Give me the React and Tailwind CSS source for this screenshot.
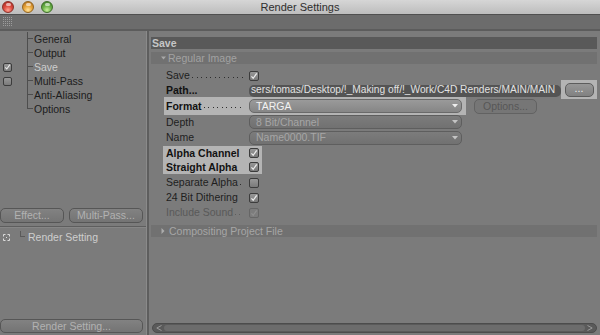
import clsx from "clsx";

const PATH = "sers/tomas/Desktop/!_Making off/!_Work/C4D Renders/MAIN/MAIN";

function Check({ on, dim, small }) {
  return (
    <span
      className={clsx(
        "flex shrink-0 items-center justify-center rounded-[2px] border",
        small ? "w-[9px] h-[9px]" : "w-[10px] h-[10px]",
        dim
          ? "border-[#666] bg-[#7c7c7c]"
          : "border-[#3c3c3c] bg-gradient-to-b from-[#979797] to-[#7a7a7a]"
      )}
    >
      {on && (
        <svg viewBox="0 0 10 10" className="w-[8px] h-[8px]">
          <path d="M1.8 5.4 L4 7.8 L8.4 1.6" fill="none" stroke={dim ? "#8e8e8e" : "#ececec"} strokeWidth="1.5" />
        </svg>
      )}
    </span>
  );
}

// dotted leader after a label, drawn as 1px dots every 4.5px
function Label({ text, bold, dim, dots }) {
  return (
    <div className="w-[80px] mr-[3px] flex items-center whitespace-nowrap">
      <span className={clsx(bold ? "font-bold text-[#121212]" : dim ? "text-[#595959]" : "text-[#1e1e1e]")}>{text}</span>
      {dots && (
        <span
          className={clsx(
            "flex-1 self-end mb-[3px] ml-[2px] mr-[2px] h-[1px]",
            dim
              ? "bg-[repeating-linear-gradient(90deg,#5e5e5e_0_1px,transparent_1px_4.5px)]"
              : "bg-[repeating-linear-gradient(90deg,#2e2e2e_0_1px,transparent_1px_4.5px)]"
          )}
        />
      )}
    </div>
  );
}

function Arrow({ light }) {
  return (
    <svg width="6" height="4" viewBox="0 0 6 4" className="ml-auto mr-[3px]">
      <path d="M0 0 H6 L3 3.5 Z" fill={light ? "#eeeeee" : "#c4c4c4"} />
    </svg>
  );
}

function Dropdown({ text, active }) {
  return (
    <div
      className={clsx(
        "w-[213px] h-[14px] flex items-center rounded-[5px] border pl-[6px]",
        active
          ? "border-[#6a6a6a] bg-gradient-to-b from-[#9a9a9a] to-[#868686] text-[#f2f2f2]"
          : "border-[#5e5e5e] bg-gradient-to-b from-[#7c7c7c] to-[#717171] text-[#a6a6a6]"
      )}
    >
      <span>{text}</span>
      <Arrow light={active} />
    </div>
  );
}

function Btn({ children, className }) {
  return (
    <div
      className={clsx(
        "flex items-center justify-center rounded-[5px] border border-[#565656] bg-gradient-to-b from-[#828282] to-[#747474] text-[#b2b2b2]",
        className
      )}
    >
      {children}
    </div>
  );
}

function TreeRow({ text, sel, check, last }) {
  return (
    <div className="flex h-[14px]">
      <div className="w-[27px] pl-[3px] flex items-center">
        {check !== undefined && <Check small on={check} />}
      </div>
      <div className="w-[6px] flex flex-col">
        <div className="h-[7px] border-l border-b border-[#4e4e4e]" />
        <div className={clsx("flex-1", !last && "border-l border-[#4e4e4e]")} />
      </div>
      <span className={clsx("ml-[1px] self-center", sel ? "text-[#cdcdcd]" : "text-[#1c1c1c]")}>{text}</span>
    </div>
  );
}

function Light({ c }) {
  const cls = {
    r: "bg-[radial-gradient(circle_at_50%_80%,#ff9e8e_0%,#dc4a3e_45%,#a02820_100%)] border-[#8c3028]",
    y: "bg-[radial-gradient(circle_at_50%_80%,#ffe29a_0%,#e7a43a_45%,#a8661a_100%)] border-[#93641f]",
    g: "bg-[radial-gradient(circle_at_50%_80%,#c6f29a_0%,#6db24a_45%,#3a7a22_100%)] border-[#3f6e2a]",
  }[c];
  return (
    <span className={clsx("relative w-[12px] h-[12px] rounded-full border", cls)}>
      <span className="absolute left-[3px] top-[1px] w-[5px] h-[3px] rounded-full bg-white/60" />
    </span>
  );
}

export default function App() {
  return (
    <div className="w-[600px] h-[335px] overflow-hidden flex flex-col bg-[#7b7b7b] font-['Liberation_Sans',Arial,sans-serif] text-[10.5px] leading-none">
      {/* title bar */}
      <div className="h-[15px] grid grid-cols-[1fr_auto_1fr] items-center bg-gradient-to-b from-[#d6d6d6] to-[#bdbdbd] border-b border-[#505050]">
        <div className="flex items-center pl-[2px] gap-[7.5px]">
          <Light c="r" />
          <Light c="y" />
          <Light c="g" />
        </div>
        <span className="text-[11px] text-[#2e2e2e]">Render Settings</span>
        <div />
      </div>

      {/* toolbar strip */}
      <div className="h-[16px] flex items-center pl-[3px] bg-[#6c6c6c] border-b-2 border-[#5c5c5c]">
        <svg width="10" height="10" viewBox="0 0 10 10">
          {[0, 1, 2, 3, 4].map(r =>
            [0, 1, 2, 3, 4].map(c => <rect key={r + "-" + c} x={c * 2} y={r * 2} width="1" height="1" fill="#9c9c9c" />)
          )}
        </svg>
      </div>

      <div className="flex-1 flex min-h-0">
        {/* left panel */}
        <div className="w-[146px] flex flex-col pt-[1px]">
          <TreeRow text="General" />
          <TreeRow text="Output" />
          <TreeRow text="Save" sel check={true} />
          <TreeRow text="Multi-Pass" check={false} />
          <TreeRow text="Anti-Aliasing" />
          <TreeRow text="Options" last />

          <div className="mt-[92px] flex gap-[5px] h-[15px]">
            <Btn className="w-[64px]">Effect...</Btn>
            <Btn className="w-[74px]">Multi-Pass...</Btn>
          </div>
          <div className="mt-[3px] h-[1px] bg-[#5e5e5e]" />
          <div className="h-[1px] bg-[#868686]" />

          <div className="mt-[2px] h-[15px] flex items-center">
            <svg width="7" height="7" viewBox="0 0 7 7" className="ml-[3px]">
              <path d="M0.5 2.5 V0.5 H2.5 M4.5 0.5 H6.5 V2.5 M6.5 4.5 V6.5 H4.5 M2.5 6.5 H0.5 V4.5" fill="none" stroke="#dcdcdc" strokeWidth="1" />
              <rect x="3" y="3" width="1" height="1" fill="#dcdcdc" />
            </svg>
            <div className="ml-[10px] self-start mt-[1px] w-[5px] h-[6px] border-l border-b border-[#5a5a5a]" />
            <span className="ml-[3px] text-[#cecece]">Render Setting</span>
          </div>

          <Btn className="mt-auto mb-[2px] h-[14px] w-[143px]">Render Setting...</Btn>
        </div>

        <div className="w-[1px] bg-[#8a8a8a]" />
        <div className="w-[2px] bg-[#5e5e5e]" />

        {/* right panel */}
        <div className="flex-1 flex flex-col pl-[2px] pr-[3px] pt-[6px]">
          <div className="h-[12px] flex items-center pl-[1px] bg-[#595959] font-bold text-[#c6c6c6]">Save</div>

          <div className="mt-[3px] h-[12px] flex items-center pl-[10px] bg-[#717171] text-[#a2a2a2]">
            <svg width="5" height="4" viewBox="0 0 5 4" className="mr-[2px]">
              <path d="M0 0.5 H5 L2.5 3.5 Z" fill="#a8a8a8" />
            </svg>
            Regular Image
          </div>

          <div className="mt-[4px] flex flex-col">
            <div className="flex items-center h-[15px] pl-[15px]">
              <Label text="Save" dots />
              <Check on />
            </div>

            <div className="flex items-center h-[15px] pl-[15px]">
              <Label text="Path..." bold />
              <div className="w-[312px] h-[12px] rounded-[5px] bg-[#545454] text-[#e2e2e2] text-[10.2px] whitespace-nowrap flex items-center pl-[2px]">
                {PATH}
              </div>
              <div className="flex-1 h-[19px] -mt-[3px] -mb-[1px] bg-[#b4b4b4] flex items-center justify-center">
                <div className="w-[29px] h-[14px] rounded-[5px] border border-[#5c5c5c] bg-gradient-to-b from-[#979797] to-[#818181] text-[#ececec] flex items-center justify-center pb-[3px]">
                  ...
                </div>
              </div>
            </div>

            <div className="flex items-center h-[16px]">
              <div className="ml-[13px] pl-[2px] w-[302px] h-[18px] -my-[1px] bg-[#b4b4b4] flex items-center">
                <Label text="Format" bold dots />
                <Dropdown text="TARGA" active />
              </div>
              <div className="ml-[8px] w-[63px] h-[15px] rounded-[5px] border border-[#626262] bg-[#767676] text-[#575757] flex items-center justify-center">
                Options...
              </div>
            </div>

            <div className="flex items-center h-[16px] pl-[15px]">
              <Label text="Depth" />
              <Dropdown text="8 Bit/Channel" />
            </div>

            <div className="flex items-center h-[15px] pl-[15px]">
              <Label text="Name" />
              <Dropdown text="Name0000.TIF" />
            </div>

            <div className="mt-[1px] mb-[1px] ml-[12px] pl-[3px] w-[99px] bg-[#b4b4b4] flex flex-col">
              <div className="flex items-center h-[14px]">
                <Label text="Alpha Channel" bold />
                <Check on />
              </div>
              <div className="flex items-center h-[14px]">
                <Label text="Straight Alpha" bold />
                <Check on />
              </div>
            </div>

            <div className="flex items-center h-[15px] pl-[15px]">
              <Label text="Separate Alpha" dots />
              <Check />
            </div>
            <div className="flex items-center h-[15px] pl-[15px]">
              <Label text="24 Bit Dithering" />
              <Check on />
            </div>
            <div className="flex items-center h-[15px] pl-[15px]">
              <Label text="Include Sound" dim dots />
              <Check on dim />
            </div>
          </div>

          <div className="mt-[5px] h-[12px] flex items-center pl-[10px] bg-[#717171] text-[#a6a6a6]">
            <svg width="4" height="6" viewBox="0 0 4 6" className="mr-[4px]">
              <path d="M0.5 0 V6 L3.5 3 Z" fill="#acacac" />
            </svg>
            Compositing Project File
          </div>

          <div className="mt-auto mb-[2px] ml-[1px] h-[10px] rounded-full bg-[#5a5a5a] border border-[#4c4c4c] flex items-center px-[3px] gap-[2px]">
            <svg width="6" height="6" viewBox="0 0 6 6">
              <path d="M5.5 0.5 L0.8 3 L5.5 5.5" fill="none" stroke="#9a9a9a" strokeWidth="1" />
            </svg>
            <div className="flex-1 h-[6px] rounded-full bg-[#6c6c6c]" />
            <svg width="6" height="6" viewBox="0 0 6 6">
              <path d="M0.5 0.5 L5.2 3 L0.5 5.5" fill="none" stroke="#9a9a9a" strokeWidth="1" />
            </svg>
          </div>
        </div>
      </div>
    </div>
  );
}
